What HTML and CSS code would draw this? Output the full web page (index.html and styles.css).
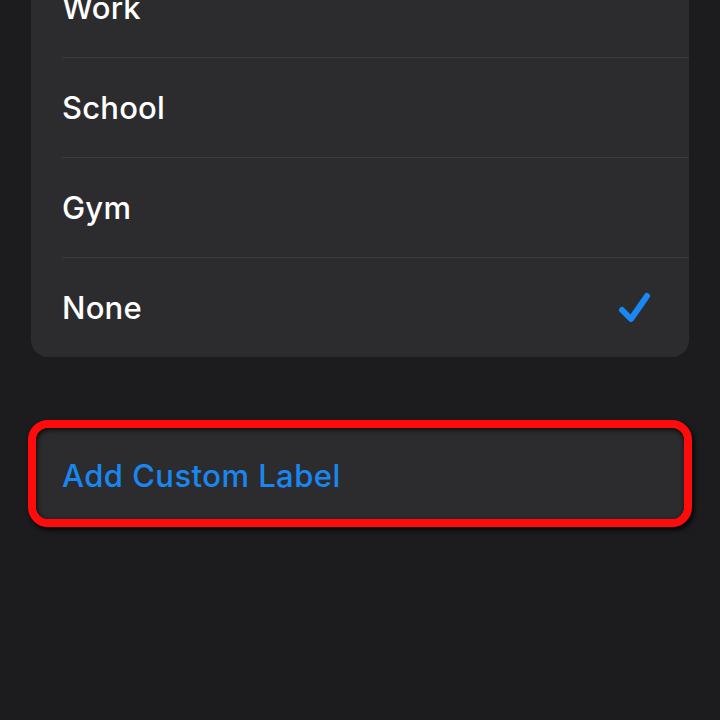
FILE: index.html
```html
<!DOCTYPE html>
<html>
<head>
<meta charset="utf-8">
<link rel="stylesheet" href="styles.css">
</head>
<body>
<div class="screen">
  <div class="list">
    <div class="row"><span class="label">Work</span></div>
    <div class="row"><span class="label">School</span></div>
    <div class="row"><span class="label">Gym</span></div>
    <div class="row"><span class="label">None</span>
      <svg class="check" width="36" height="36" viewBox="0 0 36 36"><path d="M5 20 L14 29 L30 6" fill="none" stroke="#1a87f6" stroke-width="6" stroke-linecap="round" stroke-linejoin="round"/></svg>
    </div>
  </div>
  <div class="highlight">
    <div class="action">Add Custom Label</div>
  </div>
</div>
</body>
</html>
```
FILE: styles.css
```css
html, body {
  margin: 0;
  padding: 0;
  background: #1c1c1e;
  height: 100%;
  overflow: hidden;
}
.screen {
  padding: 0 31px;
  font-family: Inter, "Liberation Sans", sans-serif;
}
.list {
  margin-top: -42px;
  background: #2c2c2e;
  border-radius: 0 0 17px 17px;
}
.row {
  height: 100px;
  margin-left: 31px;
  padding-right: 36px;
  display: flex;
  align-items: center;
  justify-content: space-between;
  border-bottom: 1px solid #3b3b3d;
  box-sizing: border-box;
}
.row:last-child {
  border-bottom: none;
  height: 99px;
}
.label {
  color: #ffffff;
  font-size: 31px;
  font-weight: 500;
  letter-spacing: 0.2px;
}
.check {
  display: block;
}
.highlight {
  margin: 63px -3px 0;
  border: 8px solid #ff0b0b;
  border-radius: 20px;
  box-shadow: 2px 3px 5px rgba(0,0,0,0.9);
  overflow: hidden;
}
.action {
  height: 91px;
  display: flex;
  align-items: center;
  padding-left: 26px;
  padding-top: 3px;
  box-sizing: border-box;
  background: #2c2c2e;
  box-shadow: inset 1px 2px 5px rgba(0,0,0,0.8);
  border-radius: 12px;
  color: #1a86f0;
  font-size: 31px;
  font-weight: 500;
  letter-spacing: 0.45px;
}
```
